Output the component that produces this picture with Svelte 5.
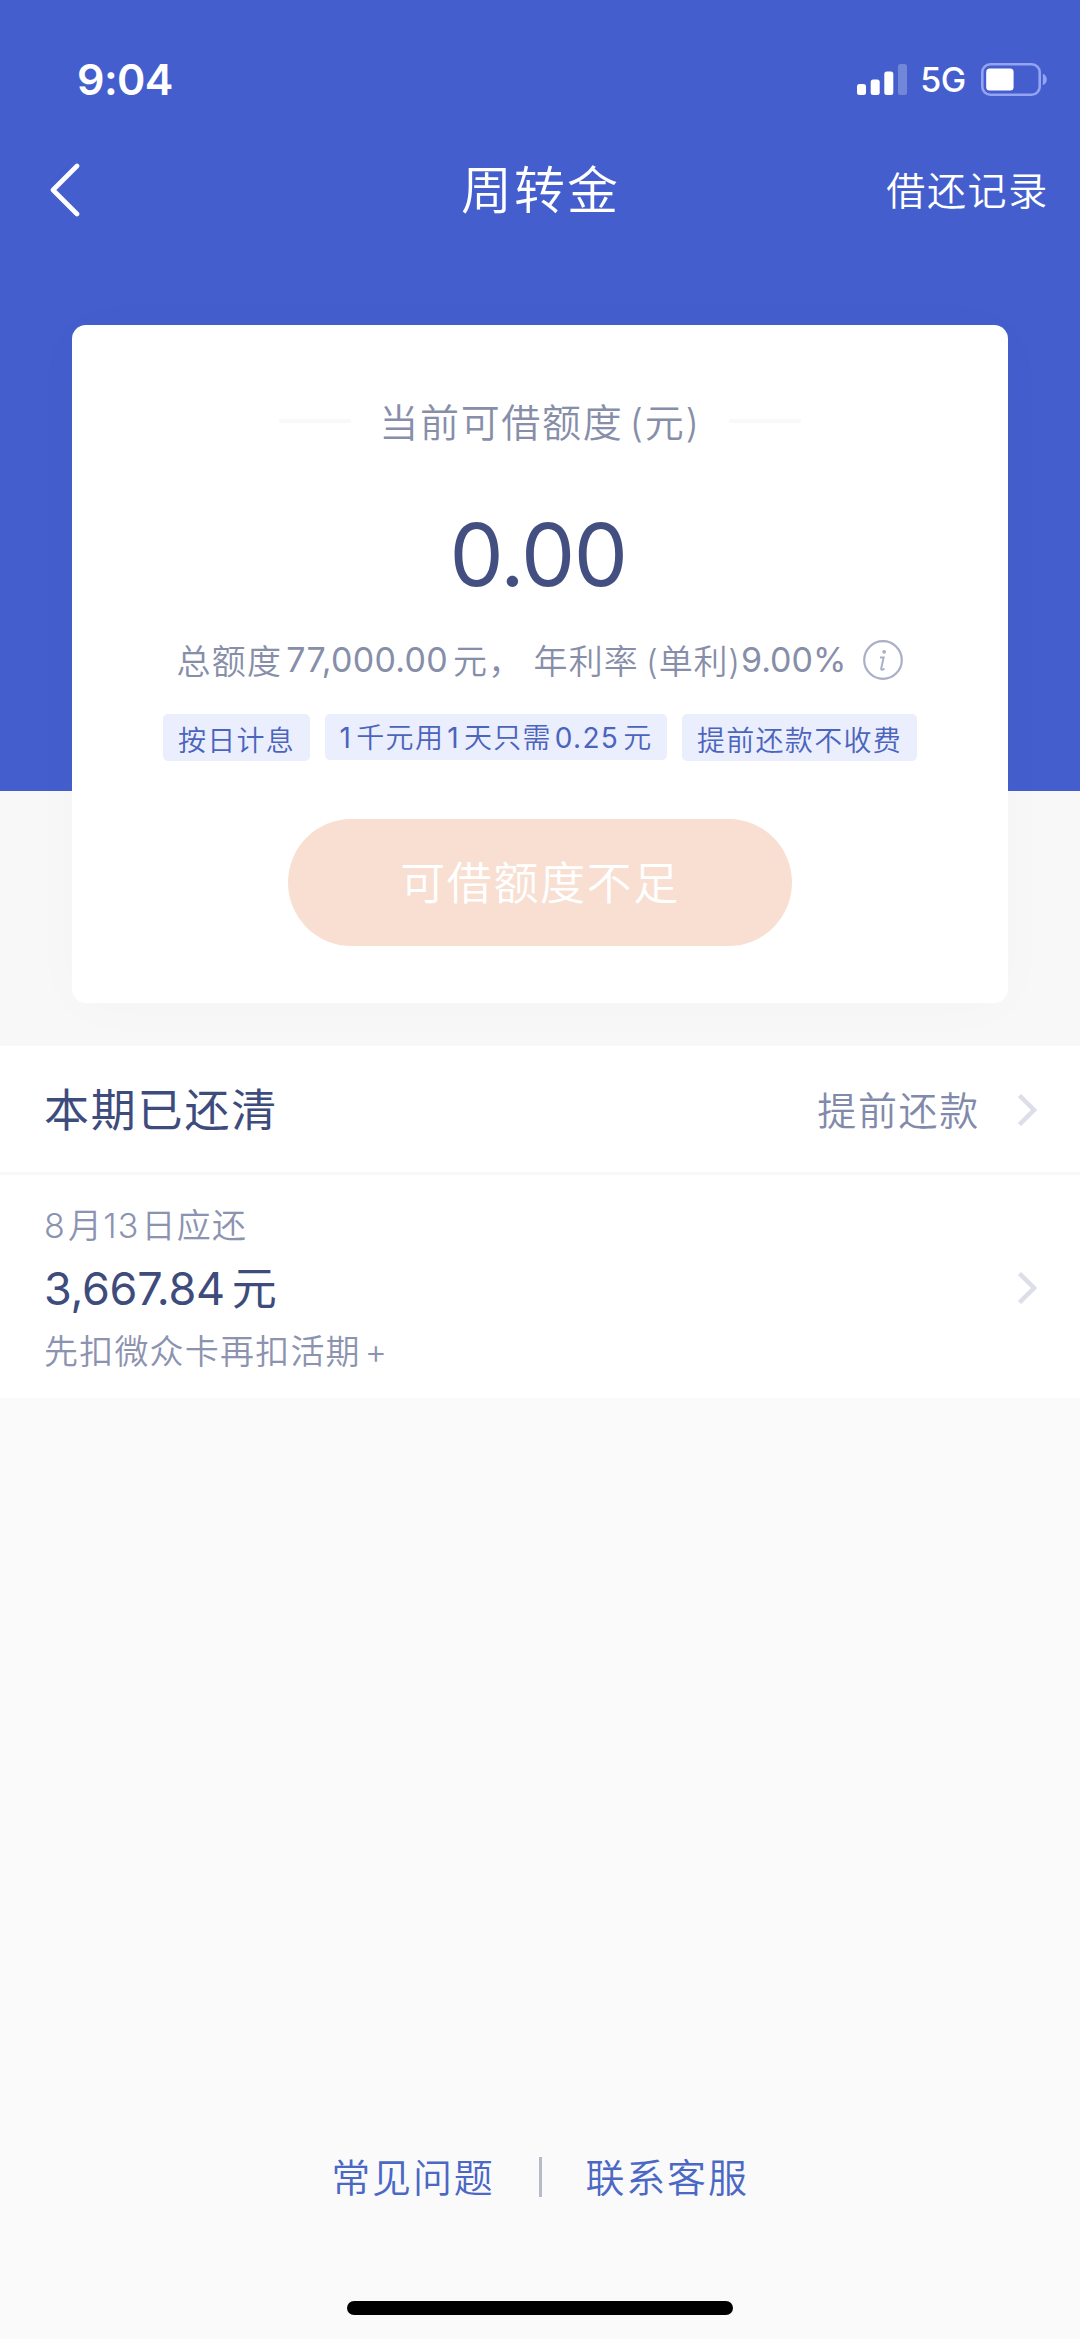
<script>
  let available = '0.00';
  let total = '77,000.00';
  let rate = '9.00%';
  let dueAmount = '3,667.84';

  const footerLinks = ['常见问题', '联系客服'];
</script>

<div class="page">
  <div class="hero">
    <div class="status">
      <span class="time">9:04</span>
      <div class="status-right">
        <svg class="signal" viewBox="0 0 50 31" width="50" height="31" fill="#fff" aria-hidden="true">
          <rect x="0" y="20" width="9" height="11" rx="2.5"/>
          <rect x="13.7" y="15.5" width="9" height="15.5" rx="2.5"/>
          <rect x="27.3" y="7.5" width="9" height="23.5" rx="2.5"/>
          <rect x="41" y="0" width="9" height="31" rx="2.5" opacity="0.25"/>
        </svg>
        <span class="network">5G</span>
        <svg class="battery" viewBox="0 0 67 33" width="67" height="33" aria-hidden="true">
          <rect x="1.3" y="1.3" width="57.4" height="30.4" rx="8" fill="none" stroke="#94a4f2" stroke-width="2.6"/>
          <rect x="5.2" y="5.4" width="27.4" height="22" rx="3.5" fill="#fff"/>
          <path d="M61.8 10.8c2.4.8 4 3 4 5.7s-1.6 4.9-4 5.7z" fill="#94a4f2"/>
        </svg>
      </div>
    </div>

    <nav class="nav">
      <button type="button" class="back" aria-label="返回">
        <svg viewBox="0 0 30 54" width="30" height="54" fill="none" stroke="#fff" stroke-width="4.6" stroke-linecap="round" stroke-linejoin="round" aria-hidden="true">
          <path d="M27 3 3 27l24 24"/>
        </svg>
      </button>
      <h1>周转金</h1>
      <button type="button" class="records">借还记录</button>
    </nav>

    <section class="card">
      <div class="card-head">
        <span class="line"></span>
        <h2>当前可借额度<span class="paren">(</span>元<span>)</span></h2>
        <span class="line"></span>
      </div>

      <div class="amount">{available}</div>

      <div class="summary">
        <span>总额度</span>
        <span class="total">{total}</span>
        <span class="comma">元，</span>
        <span>年利率</span>
        <span class="simple">(单利)</span>
        <span class="rate">{rate}</span>
        <svg class="info" viewBox="0 0 40 40" width="40" height="40" fill="none" stroke="#a9afc6" aria-hidden="true">
          <circle cx="20" cy="20" r="18.8" stroke-width="2.2"/>
          <circle cx="21.2" cy="11.8" r="1.9" fill="#a9afc6" stroke="none"/>
          <path d="M17 17.6h3.6l-2.4 10.8c-.2 1.2.6 1.5 1.5 1.2l1.8-1" stroke-width="2"/>
        </svg>
      </div>

      <ul class="tags">
        <li>按日计息</li>
        <li class="mixed"><b>1</b>千元用<b>1</b>天只需<b>0.25</b>元</li>
        <li>提前还款不收费</li>
      </ul>

      <button type="button" class="borrow" disabled>可借额度不足</button>
    </section>
  </div>

  <section class="bills">
    <div class="bill-head">
      <h3>本期已还清</h3>
      <span class="early">提前还款</span>
      <svg class="chevron" viewBox="0 0 20 34" width="20" height="34" aria-hidden="true">
        <path d="M2.5 2.5 17 17 2.5 31.5"/>
      </svg>
    </div>
    <div class="bill-row">
      <div class="bill-info">
        <p class="date">8<i>月</i>13<i>日</i>应还</p>
        <p class="due">{dueAmount}<span>元</span></p>
        <p class="source">先扣微众卡再扣活期<span>+</span></p>
      </div>
      <svg class="chevron" viewBox="0 0 20 34" width="20" height="34" aria-hidden="true">
        <path d="M2.5 2.5 17 17 2.5 31.5"/>
      </svg>
    </div>
  </section>

  <footer class="footer">
    <div class="links">
      {#each footerLinks as link, i}
        {#if i > 0}<span class="sep"></span>{/if}
        <span class="link">{link}</span>
      {/each}
    </div>
    <div class="home-bar"></div>
  </footer>
</div>

<style>
  :global(body) {
    margin: 0;
    background: #fafafa;
  }
  .page {
    width: 1080px;
    height: 2339px;
    display: flex;
    flex-direction: column;
    box-sizing: border-box;
    overflow: hidden;
    background: #fafafa;
    font-family: Inter, "Noto Sans CJK SC", sans-serif;
    font-weight: 350;
    color: #3e4b7d;
    white-space: nowrap;
  }
  h1, h2, h3, p, ul {
    margin: 0;
    padding: 0;
    font-weight: inherit;
  }
  button {
    border: 0;
    padding: 0;
    background: none;
    font: inherit;
    color: inherit;
  }
  svg {
    display: block;
    flex: none;
  }

  .hero {
    height: 1046px;
    background: linear-gradient(#445fcd 791px, #f8f8f8 791px);
  }
  .status {
    height: 140px;
    box-sizing: border-box;
    padding: 53px 32px 0 77px;
    display: flex;
    justify-content: space-between;
    align-items: flex-start;
    color: #fff;
  }
  .time {
    font-size: 43px;
    line-height: 52px;
    font-weight: 600;
    letter-spacing: -0.6px;
  }
  .status-right {
    display: flex;
    align-items: center;
    height: 52px;
  }
  .network {
    margin: 1px 15px 0 13px;
    font-size: 34px;
    font-weight: 500;
    letter-spacing: -0.3px;
  }

  .nav {
    height: 100px;
    padding: 0 31px 0 50px;
    display: grid;
    grid-template-columns: 1fr auto 1fr;
    align-items: center;
    color: #fff;
  }
  .back {
    justify-self: start;
  }
  .nav h1 {
    font-size: 51px;
    letter-spacing: 2px;
    margin: 0 18px 6px 0;
  }
  .records {
    justify-self: end;
    padding-bottom: 4px;
    font-size: 39px;
    letter-spacing: 1.7px;
  }

  .card {
    width: 936px;
    height: 678px;
    margin: 85px auto 0;
    box-sizing: border-box;
    padding-top: 66px;
    display: flex;
    flex-direction: column;
    align-items: center;
    background: #fff;
    border-radius: 14px;
    box-shadow: 0 4px 60px rgba(0, 0, 0, 0.02);
  }
  .card-head {
    display: flex;
    align-items: center;
    gap: 28px;
    height: 60px;
    color: #878ea9;
  }
  .card-head h2 {
    padding-bottom: 3px;
    font-size: 39px;
    letter-spacing: 1.7px;
  }
  .paren {
    margin-left: 6px;
  }
  .line {
    width: 72px;
    height: 4px;
    background: #f9f9fb;
  }
  .amount {
    margin: 52px 4px 0 0;
    font-size: 86px;
    line-height: 104px;
    font-weight: 400;
    letter-spacing: -1.6px;
    color: #424f80;
  }
  .summary {
    margin-top: 28px;
    height: 50px;
    display: flex;
    align-items: center;
    font-size: 34px;
    letter-spacing: 1.2px;
    color: #878ea9;
  }
  .summary span {
    padding-bottom: 2px;
  }
  .total {
    margin: 0 5px 0 4px;
    font-weight: 400;
    letter-spacing: 0.3px;
  }
  .comma {
    margin-right: 10px;
  }
  .simple {
    margin-left: 7px;
    letter-spacing: 0.8px;
  }
  .rate {
    font-weight: 400;
    letter-spacing: 0;
  }
  .info {
    margin-left: 17px;
  }

  .tags {
    margin-top: 29px;
    display: flex;
    gap: 14.5px;
    list-style: none;
  }
  .tags li {
    height: 47px;
    line-height: 55px;
    padding: 0 15px;
    border-radius: 5px;
    background: #ebeefc;
    font-size: 28px;
    letter-spacing: 1.3px;
    color: #4b64bd;
  }
  .tags .mixed {
    height: 46px;
    line-height: 49px;
  }
  .tags b {
    font-weight: 400;
    margin: 0 4px 0 3px;
  }
  .tags b:first-child {
    margin-left: 0;
  }
  .borrow {
    width: 504px;
    height: 127px;
    margin-top: 58px;
    padding-bottom: 5px;
    border-radius: 64px;
    background: #f8dfd2;
    font-size: 45px;
    letter-spacing: 1.6px;
    color: #fff;
  }

  .bills {
    height: 352px;
    background: #fff;
  }
  .bill-head {
    height: 126px;
    padding: 0 43px 0 44px;
    display: flex;
    align-items: center;
    border-bottom: 3px solid #f8f8f9;
  }
  .bill-head h3 {
    flex: 1;
    padding-bottom: 3px;
    font-size: 45px;
    font-weight: 400;
    letter-spacing: 1.8px;
  }
  .early {
    padding-bottom: 3px;
    font-size: 39px;
    letter-spacing: 1.7px;
    margin-right: 37px;
    color: #828aab;
  }
  .chevron {
    margin-top: 2px;
    fill: none;
    stroke: #dcdee8;
    stroke-width: 4.5;
  }
  .bill-row {
    height: 223px;
    padding: 0 43px 0 44px;
    display: flex;
    align-items: center;
    justify-content: space-between;
  }
  .bill-info {
    padding-top: 4px;
  }
  .date, .source {
    font-size: 34px;
    line-height: 56px;
    letter-spacing: 1.2px;
    color: #8c93b0;
  }
  .date i {
    font-style: normal;
    margin-left: 2px;
  }
  .due {
    font-size: 45px;
    line-height: 70px;
    font-weight: 400;
    letter-spacing: -0.3px;
  }
  .due span {
    margin-left: 7px;
  }
  .source span {
    margin-left: 4px;
  }

  .footer {
    flex: 1;
    display: flex;
    flex-direction: column;
    align-items: center;
    justify-content: flex-end;
  }
  .links {
    display: flex;
    align-items: center;
    height: 60px;
    font-size: 39px;
    letter-spacing: 1.8px;
    color: #4a68c4;
  }
  .link {
    padding-bottom: 5px;
  }
  .sep {
    width: 3px;
    height: 40px;
    margin: 0 44px;
    background: #b6bac9;
  }
  .home-bar {
    width: 386px;
    height: 14px;
    margin: 94px 0 24px;
    border-radius: 7px;
    background: #000;
  }
</style>
